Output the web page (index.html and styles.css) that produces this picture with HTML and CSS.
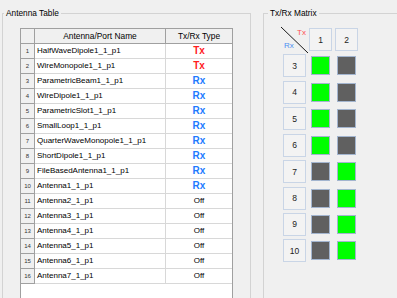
FILE: index.html
```html
<!DOCTYPE html>
<html>
<head>
<meta charset="utf-8">
<title>Antenna Table</title>
<link rel="stylesheet" href="styles.css">
</head>
<body>
<div class="app">
  <fieldset class="group group-table">
    <legend>Antenna Table</legend>
    <div class="grid">
      <div class="row head"><div class="c rh"></div><div class="c name">Antenna/Port Name</div><div class="c type">Tx/Rx Type</div></div>
      <div class="row"><div class="c rh">1</div><div class="c name">HalfWaveDipole1_1_p1</div><div class="c type tx">Tx</div></div>
      <div class="row"><div class="c rh">2</div><div class="c name">WireMonopole1_1_p1</div><div class="c type tx">Tx</div></div>
      <div class="row"><div class="c rh">3</div><div class="c name">ParametricBeam1_1_p1</div><div class="c type rx">Rx</div></div>
      <div class="row"><div class="c rh">4</div><div class="c name">WireDipole1_1_p1</div><div class="c type rx">Rx</div></div>
      <div class="row"><div class="c rh">5</div><div class="c name">ParametricSlot1_1_p1</div><div class="c type rx">Rx</div></div>
      <div class="row"><div class="c rh">6</div><div class="c name">SmallLoop1_1_p1</div><div class="c type rx">Rx</div></div>
      <div class="row"><div class="c rh">7</div><div class="c name">QuarterWaveMonopole1_1_p1</div><div class="c type rx">Rx</div></div>
      <div class="row"><div class="c rh">8</div><div class="c name">ShortDipole1_1_p1</div><div class="c type rx">Rx</div></div>
      <div class="row"><div class="c rh">9</div><div class="c name">FileBasedAntenna1_1_p1</div><div class="c type rx">Rx</div></div>
      <div class="row"><div class="c rh">10</div><div class="c name">Antenna1_1_p1</div><div class="c type rx">Rx</div></div>
      <div class="row"><div class="c rh">11</div><div class="c name">Antenna2_1_p1</div><div class="c type">Off</div></div>
      <div class="row"><div class="c rh">12</div><div class="c name">Antenna3_1_p1</div><div class="c type">Off</div></div>
      <div class="row"><div class="c rh">13</div><div class="c name">Antenna4_1_p1</div><div class="c type">Off</div></div>
      <div class="row"><div class="c rh">14</div><div class="c name">Antenna5_1_p1</div><div class="c type">Off</div></div>
      <div class="row"><div class="c rh">15</div><div class="c name">Antenna6_1_p1</div><div class="c type">Off</div></div>
      <div class="row"><div class="c rh">16</div><div class="c name">Antenna7_1_p1</div><div class="c type">Off</div></div>
    </div>
  </fieldset>
  <fieldset class="group group-matrix">
    <legend>Tx/Rx Matrix</legend>
    <div class="matrix">
      <div class="corner">
        <svg class="diag" width="23" height="23" viewBox="0 0 23 23"><line x1="-2" y1="-1" x2="25" y2="25" stroke="#1a1a1a" stroke-width="1"/></svg>
        <span class="ctx">Tx</span>
        <span class="crx">Rx</span>
      </div>
      <div class="btn">1</div><div class="btn">2</div>
      <div class="btn">3</div><div class="cell"><span class="sq on"></span></div><div class="cell"><span class="sq off"></span></div>
      <div class="btn">4</div><div class="cell"><span class="sq on"></span></div><div class="cell"><span class="sq off"></span></div>
      <div class="btn">5</div><div class="cell"><span class="sq on"></span></div><div class="cell"><span class="sq off"></span></div>
      <div class="btn">6</div><div class="cell"><span class="sq on"></span></div><div class="cell"><span class="sq off"></span></div>
      <div class="btn">7</div><div class="cell"><span class="sq off"></span></div><div class="cell"><span class="sq on"></span></div>
      <div class="btn">8</div><div class="cell"><span class="sq off"></span></div><div class="cell"><span class="sq on"></span></div>
      <div class="btn">9</div><div class="cell"><span class="sq off"></span></div><div class="cell"><span class="sq on"></span></div>
      <div class="btn">10</div><div class="cell"><span class="sq off"></span></div><div class="cell"><span class="sq on"></span></div>
    </div>
  </fieldset>
</div>
</body>
</html>
```
FILE: styles.css
```css
html, body {
  margin: 0;
  height: 298px;
  overflow: hidden;
  background: #f0f0f0;
}
body {
  font-family: "Liberation Sans", Arial, sans-serif;
  font-size: 8px;
  color: #000;
}
.app {
  display: flex;
  gap: 12px;
  padding: 8px 0 0 2px;
}
.group {
  margin: 0;
  border: 1px solid #d3d3d3;
  padding: 10px 0 0 1px;
  height: 320px;
  box-sizing: border-box;
  min-inline-size: 0;
  flex: none;
}
.group legend {
  padding: 0 2px;
  line-height: 10px;
  font-size: 8.3px;
  color: #000;
}
.group-table { width: 249px; }
.group-matrix { width: 200px; padding-left: 4px; }

/* table */
.grid {
  margin-left: 16px;
  width: 213px;
  height: 300px;
  box-sizing: border-box;
  border: 1px solid #a0a0a0;
  background: #fff;
}
.row {
  display: grid;
  grid-template-columns: 14px 131px 66px;
  height: 15px;
}
.c {
  box-sizing: border-box;
  border-bottom: 1px solid #d8d8d8;
  line-height: 14px;
  white-space: nowrap;
  overflow: hidden;
}
.name {
  border-right: 1px solid #d8d8d8;
  padding-left: 2px;
}
.type { text-align: center; }
.rh {
  background: #f0f0f0;
  border-right: 1px solid #a0a0a0;
  border-bottom: 1px solid #a0a0a0;
  font-size: 6px;
  text-align: center;
  color: #333;
}
.head .c {
  background: #f0f0f0;
  border-bottom: 1px solid #a0a0a0;
  text-align: center;
  padding-left: 0;
  font-size: 8.4px;
}
.head .name { border-right: 1px solid #a0a0a0; }
.tx { color: #ff1e1e; font-weight: bold; font-size: 10px; }
.rx { color: #1f7bff; font-weight: bold; font-size: 10px; }

/* matrix */
.matrix {
  margin-left: 15px;
  display: grid;
  grid-template-columns: 23px 23px 23px;
  grid-auto-rows: 23px;
  column-gap: 3px;
  row-gap: 3.43px;
}
.corner { position: relative; }
.diag { position: absolute; left: 0; top: 0; overflow: visible; }
.ctx, .crx {
  position: absolute;
  font-size: 8px;
  line-height: 8px;
}
.ctx { left: 14px; top: 1px; color: #ff5050; }
.crx { left: 1px; top: 14px; color: #4c8ff0; }
.btn {
  box-sizing: border-box;
  border: 1px solid #c9d5e6;
  background: #f3f3f3;
  display: flex;
  align-items: center;
  justify-content: center;
  font-size: 8.5px;
  color: #222;
}
.cell {
  display: flex;
  align-items: center;
  justify-content: center;
}
.sq {
  width: 19px;
  height: 19px;
  box-sizing: border-box;
  border: 1px solid #a3b5cf;
}
.on { background: #00ff00; }
.off { background: #606060; }
```
